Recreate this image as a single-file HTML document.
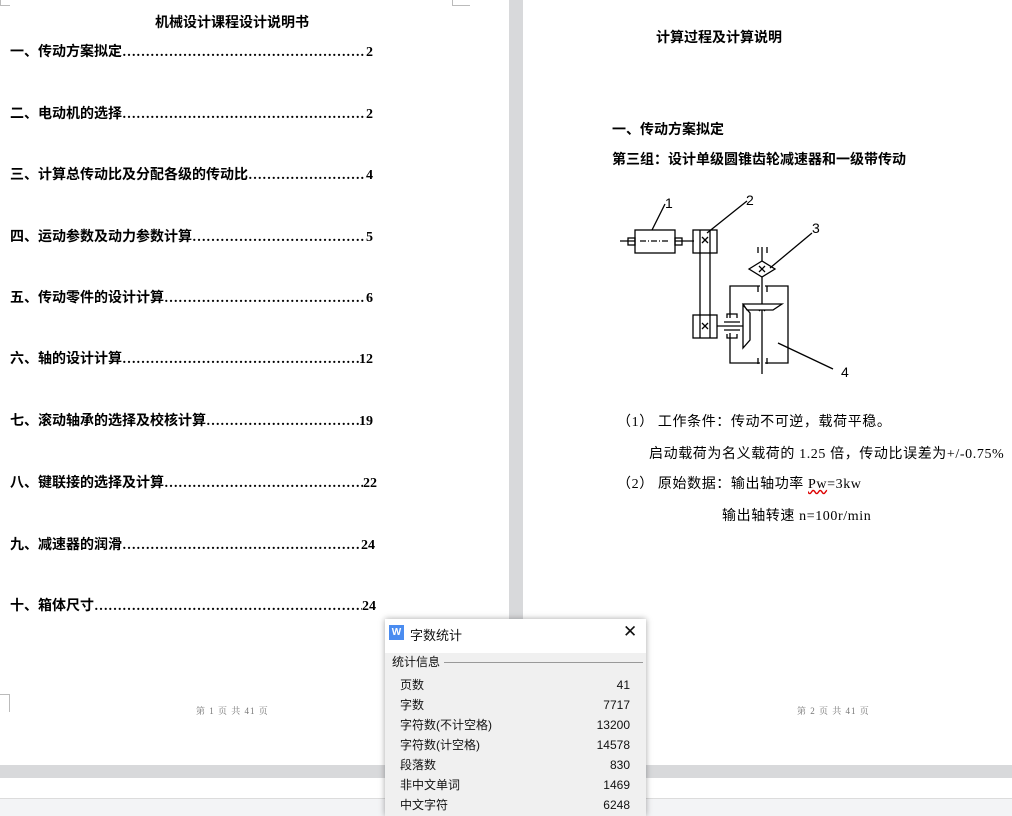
<!DOCTYPE html>
<html><head><meta charset="utf-8"><style>
*{margin:0;padding:0;box-sizing:border-box}
body{width:1012px;height:816px;overflow:hidden;background:#fff;position:relative;font-family:"Liberation Serif","Noto Serif CJK SC","Noto Sans CJK SC",serif;color:#000}
.a{position:absolute;white-space:nowrap}
.toc{position:absolute;left:10px;width:363px;display:flex;font-weight:bold;font-size:14px;line-height:16px;font-family:"Liberation Serif","Noto Sans CJK SC",serif}
.toc .d{flex:1;overflow:hidden;white-space:nowrap;font-weight:bold}
.b{font-weight:bold;font-size:14px;font-family:"Liberation Serif","Noto Sans CJK SC",serif}
.s{font-size:14px;letter-spacing:0.6px;font-family:"Liberation Serif","Noto Sans CJK SC",serif}
.dlg{position:absolute;left:385px;top:619px;width:261px;height:197px;background:#f0f0f0;box-shadow:0 0 6px rgba(0,0,0,.35);font-family:"Liberation Sans","Noto Sans CJK SC",sans-serif;font-size:12px;color:#111}
.row{position:absolute;left:15px;width:230px;display:flex;justify-content:space-between;align-items:baseline}
</style></head><body>
<div class="a" style="left:509px;top:0;width:14px;height:765px;background:#d8d9db"></div>
<div class="a" style="left:0;top:765px;width:1012px;height:13px;background:#d8d9db"></div>
<div class="a" style="left:0;top:798px;width:1012px;height:1px;background:#dcdcdc"></div>
<div class="a" style="left:0;top:799px;width:1012px;height:17px;background:#f3f4f6"></div>
<div class="a" style="left:0;top:0;width:10px;height:6px;border-left:1px solid #bbb;border-bottom:1px solid #bbb"></div>
<div class="a" style="left:452px;top:0;width:18px;height:6px;border-left:1px solid #bbb;border-bottom:1px solid #bbb"></div>
<div class="a" style="left:0;top:694px;width:10px;height:18px;border-top:1px solid #bbb;border-right:1px solid #bbb"></div>

<div class="a b" style="left:155px;top:12px;">机械设计课程设计说明书</div>
<div class="toc" style="top:45px"><span>一、传动方案拟定</span><span class="d">…………………………………………………………………</span><span>2</span></div>
<div class="toc" style="top:107px"><span>二、电动机的选择</span><span class="d">…………………………………………………………………</span><span>2</span></div>
<div class="toc" style="top:168px"><span>三、计算总传动比及分配各级的传动比</span><span class="d">…………………………………………………………………</span><span>4</span></div>
<div class="toc" style="top:230px"><span>四、运动参数及动力参数计算</span><span class="d">…………………………………………………………………</span><span>5</span></div>
<div class="toc" style="top:291px"><span>五、传动零件的设计计算</span><span class="d">…………………………………………………………………</span><span>6</span></div>
<div class="toc" style="top:352px"><span>六、轴的设计计算</span><span class="d">…………………………………………………………………</span><span>12</span></div>
<div class="toc" style="top:414px"><span>七、滚动轴承的选择及校核计算</span><span class="d">…………………………………………………………………</span><span>19</span></div>
<div class="toc" style="top:476px;width:367px"><span>八、键联接的选择及计算</span><span class="d">…………………………………………………………………</span><span>22</span></div>
<div class="toc" style="top:538px;width:365px"><span>九、减速器的润滑</span><span class="d">…………………………………………………………………</span><span>24</span></div>
<div class="toc" style="top:599px;width:366px"><span>十、箱体尺寸</span><span class="d">…………………………………………………………………</span><span>24</span></div>
<div class="a" style="left:196px;top:704px;font-size:9px;color:#777;letter-spacing:1px">第 1 页 共 41 页</div>

<div class="a b" style="left:656px;top:27px;">计算过程及计算说明</div>
<div class="a b" style="left:612px;top:119px;">一、传动方案拟定</div>
<div class="a b" style="left:612px;top:149px;">第三组：设计单级圆锥齿轮减速器和一级带传动</div>
<svg class="a" style="left:600px;top:180px" width="270" height="200" viewBox="600 180 270 200" fill="none" stroke="#000" stroke-width="1.3">
<line x1="620" y1="241" x2="694" y2="241"/>
<rect x="635" y="230" width="40" height="23" fill="#fff"/>
<line x1="640" y1="241" x2="670" y2="241" stroke-dasharray="6 2 1 2"/>
<rect x="628" y="238" width="7" height="7"/><rect x="675" y="238" width="7" height="7"/>
<rect x="693" y="230" width="24" height="23"/>
<line x1="700" y1="230" x2="700" y2="338"/><line x1="710" y1="230" x2="710" y2="338"/>
<rect x="693" y="315" width="24" height="23"/>
<path d="M702 237l6 6M708 237l-6 6M702 323l6 6M708 323l-6 6"/>
<line x1="652" y1="230" x2="665" y2="204"/><line x1="707" y1="233" x2="747" y2="201"/>
<line x1="717" y1="326" x2="746" y2="326"/>
<path d="M727 318v-4h10v4M727 334v4h10v-4M724 322h16M724 330h16"/>
<path d="M730 333v30h30M765 363h23V286h-23M760 286h-30v32"/>
<path d="M758 286v6M767 286v6M758 358v6M767 358v6M758 247v6M767 247v6"/>
<line x1="762" y1="247" x2="762" y2="374"/>
<path d="M749 269l13-8 13 8-13 8z" fill="#fff"/>
<path d="M759 266l6 6M765 266l-6 6M759 305l6 6M765 305l-6 6M743 323l5 5M748 323l-5 5"/>
<path d="M743 304h39l-9 6h-26zM743 305v43l7-8v-27z" fill="#fff"/>
<line x1="770" y1="268" x2="812" y2="233"/>
<line x1="778" y1="343" x2="833" y2="369"/>
<g stroke="none" fill="#000" font-family="Liberation Sans,sans-serif" font-size="14"><text x="665" y="208">1</text><text x="746" y="205">2</text><text x="812" y="233">3</text><text x="841" y="377">4</text></g>
</svg>
<div class="a s" style="left:617px;top:411px;">（1） 工作条件：传动不可逆，载荷平稳。</div>
<div class="a s" style="left:649px;top:443px;">启动载荷为名义载荷的 1.25 倍，传动比误差为+/-0.75%</div>
<div class="a s" style="left:617px;top:473px;">（2） 原始数据：输出轴功率 <span style="text-decoration:underline wavy #d00">Pw</span>=3kw</div>
<div class="a s" style="left:722px;top:505px;">输出轴转速 n=100r/min</div>
<div class="a" style="left:797px;top:704px;font-size:9px;color:#777;letter-spacing:1px">第 2 页 共 41 页</div>

<div class="dlg">
<div class="a" style="left:0;top:0;width:261px;height:34px;background:#fff"></div>
<div class="a" style="left:4px;top:6px;width:15px;height:15px;background:#4a8cf0;color:#fff;font-size:10px;text-align:center;line-height:15px;font-weight:bold">W</div>
<div class="a" style="left:25px;top:6px;font-size:13px">字数统计</div>
<div class="a" style="left:238px;top:3px;font-size:17px;font-weight:300">✕</div>
<div class="a" style="left:7px;top:34px">统计信息</div>
<div class="a" style="left:59px;top:43px;width:199px;height:1px;background:#999"></div>
<div class="row" style="top:57px"><span>页数</span><span>41</span></div>
<div class="row" style="top:77px"><span>字数</span><span>7717</span></div>
<div class="row" style="top:97px"><span>字符数(不计空格)</span><span>13200</span></div>
<div class="row" style="top:117px"><span>字符数(计空格)</span><span>14578</span></div>
<div class="row" style="top:137px"><span>段落数</span><span>830</span></div>
<div class="row" style="top:157px"><span>非中文单词</span><span>1469</span></div>
<div class="row" style="top:177px"><span>中文字符</span><span>6248</span></div>
</div>
</body></html>
